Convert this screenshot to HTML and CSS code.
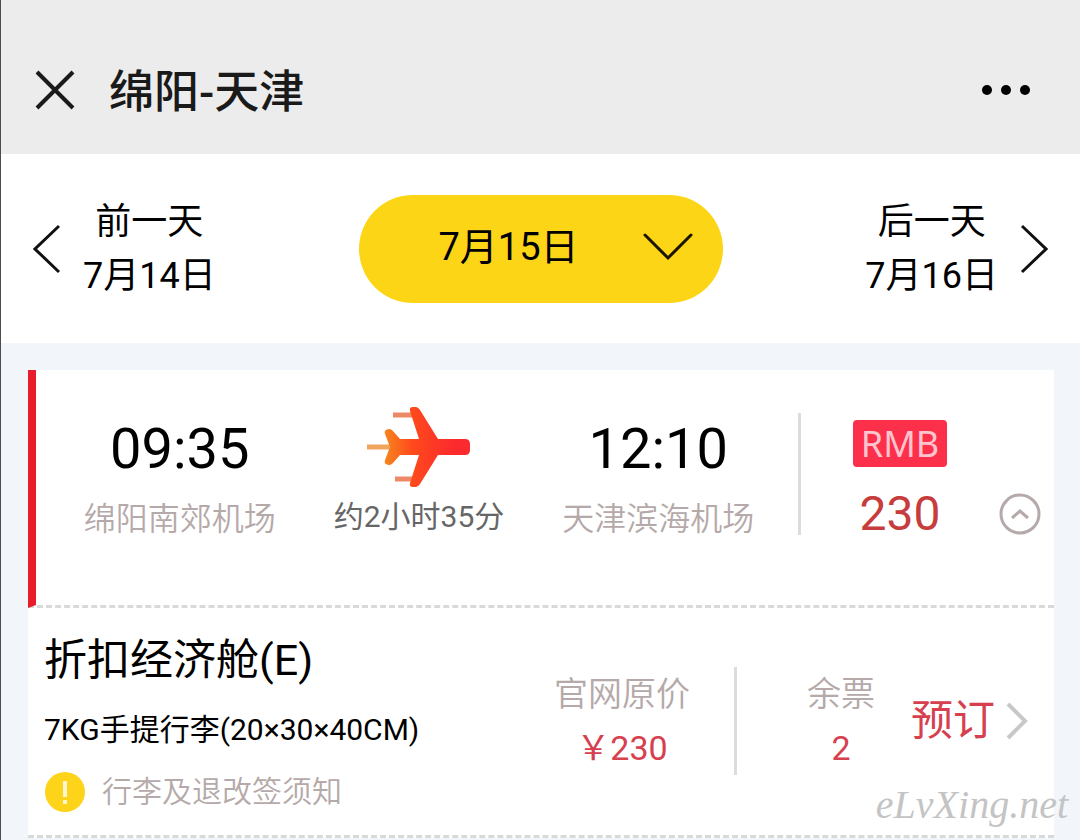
FILE: index.html
```html
<!DOCTYPE html>
<html lang="zh-CN">
<head>
    <meta charset="UTF-8">
    <meta name="viewport" content="width=device-width, initial-scale=1.0">
    <title>绵阳-天津</title>
    <link rel="stylesheet" href="styles.css">
</head>
<body>
    <header class="top-bar">
        <button type="button" class="icon-btn" aria-label="关闭">
            <svg width="40" height="40" viewBox="0 0 40 40"><path d="M2 2L38 38M38 2L2 38" fill="none" stroke="#1a1a1a" stroke-width="4"/></svg>
        </button>
        <h1 class="title">绵阳-天津</h1>
        <button type="button" class="icon-btn" aria-label="更多">
            <svg width="50" height="12" viewBox="0 0 50 12"><circle cx="6" cy="6" r="5"/><circle cx="25" cy="6" r="5"/><circle cx="44" cy="6" r="5"/></svg>
        </button>
    </header>

    <nav class="date-bar">
        <a href="#" class="day">
            <svg width="28" height="50" viewBox="0 0 28 50"><path d="M26 2L2 25L26 48" fill="none" stroke="#111" stroke-width="3"/></svg>
            <span>前一天<br>7月14日</span>
        </a>
        <button type="button" class="current-day">
            <span>7月15日</span>
            <svg width="50" height="28" viewBox="0 0 50 28"><path d="M2 2L25 25L48 2" fill="none" stroke="#1c1400" stroke-width="3" stroke-linecap="round"/></svg>
        </button>
        <a href="#" class="day">
            <span>后一天<br>7月16日</span>
            <svg width="28" height="50" viewBox="0 0 28 50"><path d="M2 2L26 25L2 48" fill="none" stroke="#111" stroke-width="3"/></svg>
        </a>
    </nav>

    <main class="list">
        <!-- 航班 -->
        <section class="flight">
            <div class="route">
                <div class="place">
                    <div class="time">09:35</div>
                    <div class="airport">绵阳南郊机场</div>
                </div>
                <div class="place">
                    <svg class="plane" width="104" height="82" viewBox="0 0 104 82">
                        <defs>
                            <linearGradient id="plane-color" gradientUnits="userSpaceOnUse" x1="16" y1="0" x2="88" y2="0">
                                <stop offset="0" stop-color="#f58a1f"/>
                                <stop offset="0.4" stop-color="#ff4a1c"/>
                                <stop offset="1" stop-color="#fb2a2e"/>
                            </linearGradient>
                        </defs>
                        <path d="M0 41H24" stroke="#f0a45c" stroke-width="5"/>
                        <path d="M26 9H48M28 73H48" stroke="#ec8a68" stroke-width="5"/>
                        <path d="M43 5Q42 1 46 1H49Q51 1 53 4L71 33H98Q103 33 103 38V44Q103 49 98 49H71L53 78Q51 81 49 81H46Q42 81 43 77L52 49H33L25 58Q22 60 19 58Q17 57 18 54L23 41L18 28Q17 25 19 24Q22 22 25 24L33 33H52Z" fill="url(#plane-color)"/>
                    </svg>
                    <div class="duration">约2小时35分</div>
                </div>
                <div class="place">
                    <div class="time">12:10</div>
                    <div class="airport">天津滨海机场</div>
                </div>
            </div>
            <div class="fare">
                <span class="currency">RMB</span>
                <div class="amount">230</div>
            </div>
            <button type="button" class="icon-btn toggle" aria-label="收起">
                <svg width="42" height="42" viewBox="0 0 42 42"><circle cx="21" cy="21" r="19" fill="none" stroke="#b5a9a9" stroke-width="3"/><path d="M13 25L21 18L29 25" fill="none" stroke="#b5a9a9" stroke-width="3"/></svg>
            </button>
        </section>

        <!-- 舱位 -->
        <section class="cabin">
            <div class="cabin-info">
                <h2 class="cabin-name">折扣经济舱(E)</h2>
                <p class="baggage">7KG手提行李(20×30×40CM)</p>
                <a href="#" class="notice">
                    <svg width="42" height="42" viewBox="0 0 42 42"><circle cx="21" cy="21" r="20" fill="#fdd41a"/><path d="M19 10H23V26H19ZM19 29H23V33H19Z" fill="#fff6cf"/></svg>
                    行李及退改签须知
                </a>
            </div>
            <div class="cell">
                <div class="label">官网原价</div>
                <div class="value">￥230</div>
            </div>
            <div class="cell seats">
                <div class="label">余票</div>
                <div class="value">2</div>
            </div>
            <a href="#" class="book">
                预订
                <svg width="22" height="38" viewBox="0 0 22 38"><path d="M2 2L19 19L2 36" fill="none" stroke="#c8c8c8" stroke-width="4"/></svg>
            </a>
        </section>
    </main>

    <div class="watermark">eLvXing.net</div>
</body>
</html>
```

FILE: styles.css
```css
* {
    box-sizing: border-box;
}

body {
    margin: 0;
    min-height: 100vh;
    overflow: hidden;
    border-left: 1px solid #4c4c4e;
    background-color: #f2f5fa;
    color: #000;
    font-family: Roboto, "Noto Sans CJK SC", sans-serif;
}

h1, h2, p {
    margin: 0;
    font-weight: 400;
}

a {
    color: inherit;
    text-decoration: none;
}

button {
    border: 0;
    padding: 0;
    color: inherit;
    font-family: inherit;
    cursor: pointer;
}

svg {
    display: block;
    flex: none;
}

.icon-btn {
    background: none;
}

/* 頂部 */
.top-bar {
    display: flex;
    align-items: center;
    gap: 34px;
    height: 154px;
    padding: 26px 49px 0 34px;
    background-color: #ececec;
}

.title {
    flex: 1;
    padding-top: 6px;
    color: #1a1a1a;
    font-size: 45px;
    font-weight: 500;
    line-height: 54px;
}

/* 日期 */
.date-bar {
    display: flex;
    align-items: center;
    justify-content: space-between;
    height: 189px;
    padding: 0 32px;
    background-color: #fff;
}

.day {
    display: flex;
    align-items: center;
    gap: 22px;
    font-size: 36px;
    line-height: 54px;
    text-align: center;
}

.current-day {
    display: flex;
    align-items: center;
    justify-content: flex-end;
    gap: 64px;
    width: 364px;
    height: 108px;
    padding: 0 30px 4px 0;
    border-radius: 54px;
    background-color: #fdd517;
    font-size: 38px;
    line-height: 54px;
}

/* 航班列表 */
.list {
    padding: 27px 26px 0 27px;
}

.flight {
    display: flex;
    align-items: flex-start;
    height: 238px;
    padding: 36px 13px 0 24px;
    border-left: 8px solid #e81c2a;
    border-bottom: 3px dashed #d9d9d9;
    background-color: #fff;
}

.route {
    display: flex;
    flex: 1;
    margin-right: 20px;
}

.place {
    flex: 1;
    text-align: center;
    white-space: nowrap;
}

.time {
    font-size: 56px;
    line-height: 86px;
}

.airport {
    color: #b5a9a9;
    font-size: 32px;
    font-weight: 350;
    line-height: 54px;
}

.plane {
    margin: 0 auto 4px;
}

.duration {
    color: #666;
    font-size: 30px;
    line-height: 50px;
}

.fare {
    width: 201px;
    height: 122px;
    margin-top: 7px;
    padding-top: 7px;
    border-left: 3px solid #dcdcdc;
    text-align: center;
}

.currency {
    display: block;
    width: 94px;
    margin: 0 auto;
    border-radius: 4px;
    background-color: #fd304b;
    color: #ffc4cd;
    font-family: "Noto Sans", sans-serif;
    font-size: 36px;
    line-height: 47px;
}

.amount {
    margin-top: 20px;
    color: #c73c3c;
    font-size: 48px;
    line-height: 54px;
}

.toggle {
    margin-top: 87px;
}

/* 艙位 */
.cabin {
    display: flex;
    align-items: center;
    padding: 15px 26px 16px 16px;
    border-bottom: 3px dashed #d9d9d9;
    background-color: #fff;
}

.cabin-info {
    flex: 1;
    padding-top: 10px;
}

.cabin-name {
    font-size: 43px;
    line-height: 54px;
}

.baggage {
    margin-top: 16px;
    font-size: 30px;
    line-height: 54px;
}

.notice {
    display: flex;
    align-items: center;
    gap: 16px;
    margin-top: 8px;
    color: #b5a9a9;
    font-size: 30px;
    font-weight: 350;
    line-height: 54px;
}

.cell {
    font-size: 34px;
    line-height: 54px;
    text-align: center;
}

.seats {
    margin-left: 44px;
    padding: 0 36px 0 70px;
    border-left: 3px solid #dcdcdc;
}

.label {
    color: #b5a9a9;
    font-weight: 350;
}

.value {
    color: #d6404f;
}

.book {
    display: flex;
    align-items: center;
    gap: 11px;
    color: #d6404f;
    font-size: 42px;
    line-height: 54px;
}

.watermark {
    position: absolute;
    right: 12px;
    bottom: 12px;
    color: #c4c4c4;
    font-family: "Brush Script MT", "Liberation Serif", cursive;
    font-size: 40px;
    font-style: italic;
    line-height: 46px;
}
```
